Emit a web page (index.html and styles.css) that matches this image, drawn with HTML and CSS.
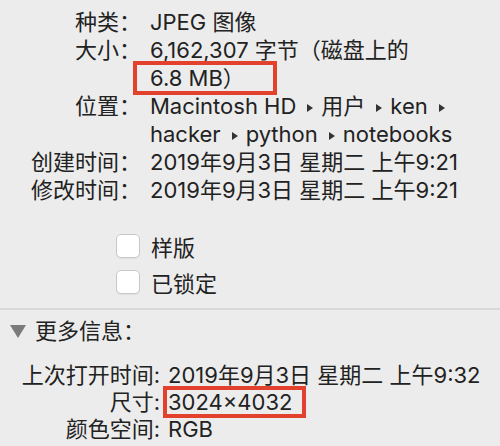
FILE: index.html
```html
<!DOCTYPE html>
<html lang="zh-CN">
<head>
  <meta charset="UTF-8">
  <title>简介</title>
  <link rel="stylesheet" href="styles.css">
</head>
<body>
  <div class="panel">
    <div class="info">
      <div class="label">种类：</div>
      <div class="value">JPEG 图像</div>

      <div class="label">大小：</div>
      <div class="value">6,162,307 字节（磁盘上的<br><span class="mark mark-size">6.8 MB）</span></div>

      <div class="label">位置：</div>
      <div class="value">Macintosh HD<span class="sep"></span>用户<span class="sep"></span>ken<span class="sep"></span><br>hacker<span class="sep"></span>python<span class="sep"></span>notebooks</div>

      <div class="label">创建时间：</div>
      <div class="value">2019年9月3日 星期二 上午9:21</div>

      <div class="label">修改时间：</div>
      <div class="value">2019年9月3日 星期二 上午9:21</div>
    </div>

    <div class="checks">
      <label class="check"><span class="box"></span>样版</label>
      <label class="check"><span class="box"></span>已锁定</label>
    </div>

    <div class="section">
      <div class="section-title"><span class="disclosure"></span>更多信息：</div>
      <div class="more">
        <div class="label">上次打开时间:</div>
        <div class="value">2019年9月3日 星期二 上午9:32</div>

        <div class="label">尺寸:</div>
        <div class="value"><span class="mark mark-dims">3024×4032</span></div>

        <div class="label">颜色空间:</div>
        <div class="value">RGB</div>
      </div>
    </div>
  </div>
</body>
</html>
```

FILE: styles.css
```css
body {
  margin: 0;
  background: #ececec;
  color: #222;
  font-family: Inter, "Noto Sans CJK SC", sans-serif;
  font-size: 22px;
}

.panel {
  padding-top: 8px;
}

.info {
  display: grid;
  grid-template-columns: 141px auto;
  column-gap: 9px;
  line-height: 28px;
}

.label {
  text-align: right;
  white-space: nowrap;
}

.value {
  white-space: nowrap;
}

.sep {
  display: inline-block;
  width: 0;
  height: 0;
  border-left: 6px solid #333;
  border-top: 4px solid transparent;
  border-bottom: 4px solid transparent;
  margin: 0 8px 0 11px;
  vertical-align: 2px;
}

/* red annotation boxes drawn over the text */
.mark {
  position: relative;
  display: inline-block;
}

.mark::after {
  content: "";
  position: absolute;
  border: 4px solid #e2412e;
}

.mark-size::after {
  top: -3px;
  bottom: -3px;
  left: -17px;
  width: 136px;
}

.mark-dims::after {
  top: -3px;
  bottom: -2px;
  left: -5px;
  width: 135px;
}

.checks {
  margin-top: 24px;
  padding-left: 116px;
}

.check {
  display: flex;
  align-items: center;
  gap: 11px;
  height: 36px;
}

.box {
  width: 22px;
  height: 22px;
  background: #fff;
  border: 1px solid #c9c9c9;
  border-radius: 5px;
  box-shadow: 0 1px 1px rgba(0,0,0,0.06);
}

.section {
  margin-top: 8px;
  border-top: 2px solid #d9d9d9;
}

.section-title {
  display: flex;
  align-items: center;
  gap: 9px;
  margin-top: 7px;
  padding-left: 10px;
  line-height: 28px;
}

.disclosure {
  width: 0;
  height: 0;
  border-left: 8px solid transparent;
  border-right: 8px solid transparent;
  border-top: 13px solid #7b7b7b;
}

.more {
  display: grid;
  grid-template-columns: 160px auto;
  column-gap: 8px;
  margin-top: 17px;
  line-height: 27px;
}
```
